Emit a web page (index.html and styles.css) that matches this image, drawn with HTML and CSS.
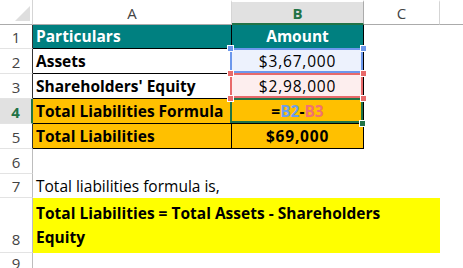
FILE: index.html
```html
<!DOCTYPE html>
<html>
<head>
<meta charset="utf-8">
<link rel="stylesheet" href="styles.css">
</head>
<body>
<div class="sheet">
  <div class="corner"><span class="tri"></span></div>
  <div class="ch">A</div>
  <div class="ch sel">B</div>
  <div class="ch">C</div>
  <div class="ch last"></div>

  <div class="rh tb">1</div>
  <div class="c a hd">Particulars</div>
  <div class="c b hd ctr">Amount</div>
  <div class="c"></div><div class="c"></div>

  <div class="rh tb">2</div>
  <div class="c a bold">Assets</div>
  <div class="c b ctr ref blue num">$3,67,000<i class="h hl tl"></i><i class="h hl tr"></i></div>
  <div class="c"></div><div class="c"></div>

  <div class="rh tb">3</div>
  <div class="c a bold">Shareholders' Equity</div>
  <div class="c b ctr ref red num">$2,98,000<i class="h hr tl"></i><i class="h hr tr"></i><i class="h hr bl"></i><i class="h hr br"></i></div>
  <div class="c"></div><div class="c"></div>

  <div class="rh tb sel">4</div>
  <div class="c a bold or">Total Liabilities Formula</div>
  <div class="c b bold or ctr ref green">=<span class="kb">B2</span>-<span class="kr">B3</span><i class="fill"></i></div>
  <div class="c"></div><div class="c"></div>

  <div class="rh tb">5</div>
  <div class="c a bold or">Total Liabilities</div>
  <div class="c b bold or ctr num">$69,000</div>
  <div class="c"></div><div class="c"></div>

  <div class="rh">6</div>
  <div class="c"></div><div class="c"></div><div class="c"></div><div class="c"></div>

  <div class="rh">7</div>
  <div class="c txt">Total liabilities formula is,</div>
  <div class="c"></div><div class="c"></div><div class="c"></div>

  <div class="rh r8">8</div>
  <div class="c merged">Total Liabilities = Total Assets - Shareholders Equity</div>
  <div class="c"></div>

  <div class="rh r9">9</div>
  <div class="c"></div><div class="c"></div><div class="c"></div><div class="c"></div>
</div>
</body>
</html>
```

FILE: styles.css
```css
html, body {
  margin: 0;
  padding: 0;
  background: #fff;
  overflow: hidden;
}

.sheet {
  width: 463px;
  height: 268px;
  display: grid;
  grid-template-columns: 33px 199px 132px 76px 1fr;
  grid-template-rows: 25px 24px 25px 25px 25px 25px 25px 24px 55px 1fr;
  font-family: "Open Sans", Lato, "Liberation Sans", sans-serif;
  font-size: 15.5px;
  color: #000;
  overflow: hidden;
}

.corner {
  box-sizing: border-box;
  border-right: 1px solid #d5d5d5;
  border-bottom: 1px solid #ababab;
  display: flex;
  justify-content: flex-end;
  align-items: flex-end;
  padding: 0 2px 3px 0;
}

.tri {
  width: 15px;
  height: 15px;
  background: #dedede;
  clip-path: polygon(100% 0, 100% 100%, 0 100%);
}

.ch {
  box-sizing: border-box;
  border-right: 1px solid #d5d5d5;
  border-bottom: 1px solid #ababab;
  border-top: 2px solid #fff;
  display: flex;
  justify-content: center;
  align-items: center;
  color: #444;
  font-size: 15px;
}

.ch.sel {
  background: #e1e1e1;
  color: #217346;
  font-weight: bold;
  border-bottom: 2px solid #217346;
  border-right-color: #ababab;
}

.ch.last {
  border-right: none;
}

.rh {
  box-sizing: border-box;
  border-right: 1px solid #bdbdbd;
  border-bottom: 1px solid #e3e3e3;
  display: flex;
  justify-content: center;
  align-items: center;
  color: #444;
  font-size: 15px;
  padding-top: 1px;
}

.rh.tb {
  border-right-color: #333;
}

.rh.sel {
  background: #e1e1e1;
  color: #217346;
  font-weight: bold;
  border-right: 2px solid #217346;
}

.rh.r8 {
  align-items: flex-end;
  padding-bottom: 3px;
}

.rh.r9 {
  align-items: flex-start;
  padding-top: 0;
  border-bottom: none;
}

.c {
  box-sizing: border-box;
  display: flex;
  align-items: flex-end;
  padding: 0 3px 1px;
  white-space: nowrap;
  min-width: 0;
}

.a, .b {
  border-right: 1px solid #000;
  border-bottom: 1px solid #000;
}

.ctr {
  justify-content: center;
}

.num {
  letter-spacing: 0.8px;
}

.bold {
  font-weight: bold;
}

.hd {
  background: #008080;
  color: #fff;
  font-weight: bold;
}

.or {
  background: #ffc000;
}

.ref {
  position: relative;
}

.ref::before {
  content: "";
  position: absolute;
  top: -1px;
  left: -2px;
  right: 0;
  bottom: 0;
  border: 2px solid transparent;
  z-index: 1;
}

.blue {
  background: #edf2fd;
}

.blue::before {
  border-color: #6d98ec;
}

.red {
  background: #fdeeee;
}

.red::before {
  border-color: #e86a6a;
  z-index: 2;
}

.green::before {
  border-color: #217346;
  z-index: 3;
}

.kb {
  color: #6d9eeb;
}

.kr {
  color: #f07272;
}

.h {
  position: absolute;
  width: 5px;
  height: 5px;
  border: 1px solid #fff;
  z-index: 4;
}

.hl {
  background: #6d98ec;
}

.hr {
  background: #e86a6a;
  z-index: 5;
}

.tl { left: -5px; top: -4px; }
.tr { right: -4px; top: -4px; }
.bl { left: -5px; bottom: -4px; }
.br { right: -4px; bottom: -4px; }

.fill {
  position: absolute;
  right: -3px;
  bottom: -4px;
  width: 5px;
  height: 5px;
  background: #217346;
  border: 1px solid #fff;
  z-index: 6;
}

.txt {
  overflow: visible;
}

.merged {
  grid-column: 2 / 5;
  background: #ffff00;
  font-weight: bold;
  white-space: normal;
  line-height: 24px;
  padding: 0 30px 4px 3px;
}
```
